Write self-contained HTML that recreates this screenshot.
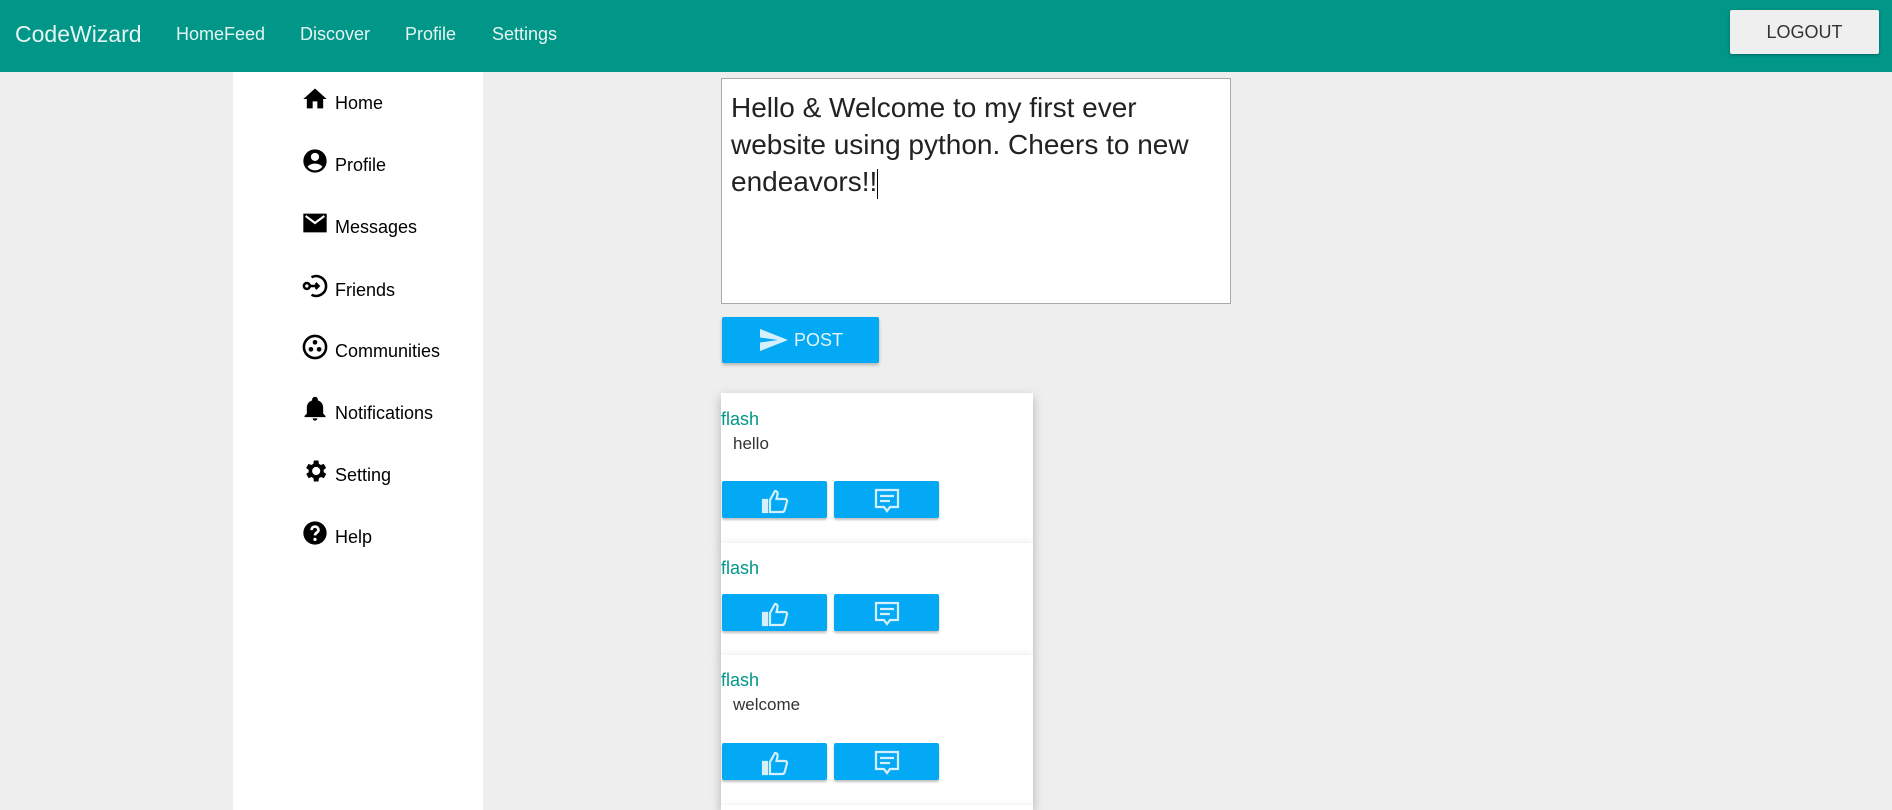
<!DOCTYPE html>
<html style="overflow:hidden;height:810px"><head><meta charset="utf-8"><style>
*{box-sizing:border-box;margin:0;padding:0}
body{width:1892px;height:810px;overflow:hidden;background:#eeeeee;font-family:"Liberation Sans",Arial,sans-serif;position:relative}
.nav{position:absolute;left:0;top:0;width:1892px;height:72px;background:#009688;color:#e6f4f2}
.nav span{position:absolute;top:0;line-height:68px;font-size:18px}
.logout{position:absolute;left:1730px;top:10px;width:149px;height:44px;background:#efefef;color:#333;font-size:18px;text-align:center;line-height:44px;border-radius:2px;box-shadow:0 1px 3px rgba(0,0,0,.3)}
.side{position:absolute;left:233px;top:72px;width:250px;height:738px;background:#fff}
.item{position:absolute;left:69px;height:30px;font-size:18px;color:#000}
.item svg{position:absolute;left:-1px;top:-18px;width:28px;height:28px}
.item span{position:absolute;left:33px;top:-10px;white-space:nowrap}
.ta{position:absolute;left:721px;top:78px;width:510px;height:226px;background:#fff;border:1px solid #aaa;font-size:28px;color:#222;padding:10px 9px;line-height:37px}
.post{position:absolute;left:722px;top:317px;width:157px;height:46px;background:#03a9f4;border-radius:2px;box-shadow:0 2px 3px rgba(0,0,0,.25);color:#e3f5fd;font-size:18px}
.card{position:absolute;left:721px;width:312px;background:#fff;box-shadow:0 4px 10px rgba(0,0,0,.25)}
.fl{position:absolute;left:0;color:#009688;font-size:18px}
.tx{position:absolute;left:12px;color:#333;font-size:17px}
.b{position:absolute;width:105px;height:37px;background:#03a9f4;border-radius:2px;box-shadow:0 2px 2px rgba(0,0,0,.25)}
.b svg{position:absolute;left:38px;top:5px;width:30px;height:30px}
</style></head><body>
<div class="nav">
<span style="left:15px;font-size:23px">CodeWizard</span>
<span style="left:176px">HomeFeed</span>
<span style="left:300px">Discover</span>
<span style="left:405px">Profile</span>
<span style="left:492px">Settings</span>
<div class="logout">LOGOUT</div>
</div>
<div class="side">
<div class="item" style="top:31px"><svg viewBox="0 0 24 24"><path d="M10 20v-6h4v6h5v-8h3L12 3 2 12h3v8z"/></svg><span>Home</span></div>
<div class="item" style="top:93px"><svg viewBox="0 0 24 24"><path d="M12 2a10 10 0 100 20 10 10 0 000-20zm0 3a3.5 3.5 0 110 7 3.5 3.5 0 010-7zm0 15c-2.7 0-5-1.3-6.3-3.3 1.5-1.6 3.8-2.4 6.3-2.4s4.8.8 6.3 2.4C17 18.7 14.7 20 12 20z"/></svg><span>Profile</span></div>
<div class="item" style="top:155px"><svg viewBox="0 0 24 24"><path d="M2 4h20v16H2z" fill="#000"/><path d="M4 6l8 6 8-6" stroke="#fff" stroke-width="1.8" fill="none"/></svg><span>Messages</span></div>
<div class="item" style="top:218px"><svg viewBox="0 0 24 24" fill="none" stroke="#000" stroke-width="2.2"><path d="M9 4.5A8.5 8.5 0 1 1 9 19.5"/><circle cx="5" cy="12" r="2.5"/><path d="M8 12h7M12.5 9.5l2.5 2.5-2.5 2.5"/></svg><span>Friends</span></div>
<div class="item" style="top:279px"><svg viewBox="0 0 24 24"><circle cx="12" cy="12" r="9.5" fill="none" stroke="#000" stroke-width="2.2"/><circle cx="12" cy="8" r="2"/><circle cx="8.5" cy="14" r="2"/><circle cx="15.5" cy="14" r="2"/></svg><span>Communities</span></div>
<div class="item" style="top:341px"><svg viewBox="0 0 24 24"><path d="M12 22a2 2 0 002-2h-4a2 2 0 002 2zm7-6V11c0-3.1-1.6-5.6-4.5-6.3V4a2.5 2.5 0 00-5 0v.7C6.6 5.4 5 7.9 5 11v5l-2 2v1h18v-1z"/></svg><span>Notifications</span></div>
<div class="item" style="top:403px"><svg viewBox="0 0 24 24"><path d="M19.4 13a7.5 7.5 0 000-2l2.1-1.6-2-3.5-2.5 1a7.5 7.5 0 00-1.7-1L15 3h-4l-.4 2.9a7.5 7.5 0 00-1.7 1l-2.5-1-2 3.5L6.6 11a7.5 7.5 0 000 2l-2.1 1.6 2 3.5 2.5-1a7.5 7.5 0 001.7 1L11 21h4l.4-2.9a7.5 7.5 0 001.7-1l2.5 1 2-3.5zM13 15.5a3.5 3.5 0 110-7 3.5 3.5 0 010 7z"/></svg><span>Setting</span></div>
<div class="item" style="top:465px"><svg viewBox="0 0 24 24"><circle cx="12" cy="12" r="10"/><path d="M9 9.5a3 3 0 116 0c0 2-3 2.3-3 4.5" stroke="#fff" stroke-width="2.3" fill="none"/><circle cx="12" cy="17.5" r="1.4" fill="#fff"/></svg><span>Help</span></div>
</div>
<div class="ta">Hello &amp; Welcome to my first ever website using python. Cheers to new endeavors!!<span style="display:inline-block;width:1px;height:30px;background:#000;vertical-align:middle"></span></div>
<div class="post"><svg style="position:absolute;left:38px;top:11px" width="28" height="24" viewBox="0 0 28 24"><path d="M0 1l28 11L0 23l0-8.5 18-2.5-18-2.5z" fill="#d5f0fc"/></svg><span style="position:absolute;left:72px;top:13px">POST</span></div>

<div class="card" style="top:393px;height:150px"><div class="fl" style="top:16px">flash</div><div class="tx" style="top:41px">hello</div>
<div class="b" style="left:1px;top:88px"><svg viewBox="0 0 30 30" fill="none" stroke="#d5f0fc" stroke-width="2.2"><path d="M3 14h4v12H3z" fill="#d5f0fc"/><path d="M10 26V14l5-9c2 0 3 1.5 2.5 3.5L16.5 13H25c1.5 0 2.3 1.3 2 2.5l-2.3 8.5c-.4 1.3-1.3 2-2.5 2z"/></svg></div>
<div class="b" style="left:113px;top:88px"><svg viewBox="0 0 30 30" fill="none" stroke="#d5f0fc" stroke-width="2.2"><path d="M4 4h22v17H18l-3 4-3-4H4z"/><path d="M8 10h14M8 15h10"/></svg></div></div>

<div class="card" style="top:543px;height:112px"><div class="fl" style="top:15px">flash</div>
<div class="b" style="left:1px;top:51px"><svg viewBox="0 0 30 30" fill="none" stroke="#d5f0fc" stroke-width="2.2"><path d="M3 14h4v12H3z" fill="#d5f0fc"/><path d="M10 26V14l5-9c2 0 3 1.5 2.5 3.5L16.5 13H25c1.5 0 2.3 1.3 2 2.5l-2.3 8.5c-.4 1.3-1.3 2-2.5 2z"/></svg></div>
<div class="b" style="left:113px;top:51px"><svg viewBox="0 0 30 30" fill="none" stroke="#d5f0fc" stroke-width="2.2"><path d="M4 4h22v17H18l-3 4-3-4H4z"/><path d="M8 10h14M8 15h10"/></svg></div></div>

<div class="card" style="top:655px;height:150px"><div class="fl" style="top:15px">flash</div><div class="tx" style="top:40px">welcome</div>
<div class="b" style="left:1px;top:88px"><svg viewBox="0 0 30 30" fill="none" stroke="#d5f0fc" stroke-width="2.2"><path d="M3 14h4v12H3z" fill="#d5f0fc"/><path d="M10 26V14l5-9c2 0 3 1.5 2.5 3.5L16.5 13H25c1.5 0 2.3 1.3 2 2.5l-2.3 8.5c-.4 1.3-1.3 2-2.5 2z"/></svg></div>
<div class="b" style="left:113px;top:88px"><svg viewBox="0 0 30 30" fill="none" stroke="#d5f0fc" stroke-width="2.2"><path d="M4 4h22v17H18l-3 4-3-4H4z"/><path d="M8 10h14M8 15h10"/></svg></div></div>

<div class="card" style="top:805px;height:5px"></div>
</body></html>
